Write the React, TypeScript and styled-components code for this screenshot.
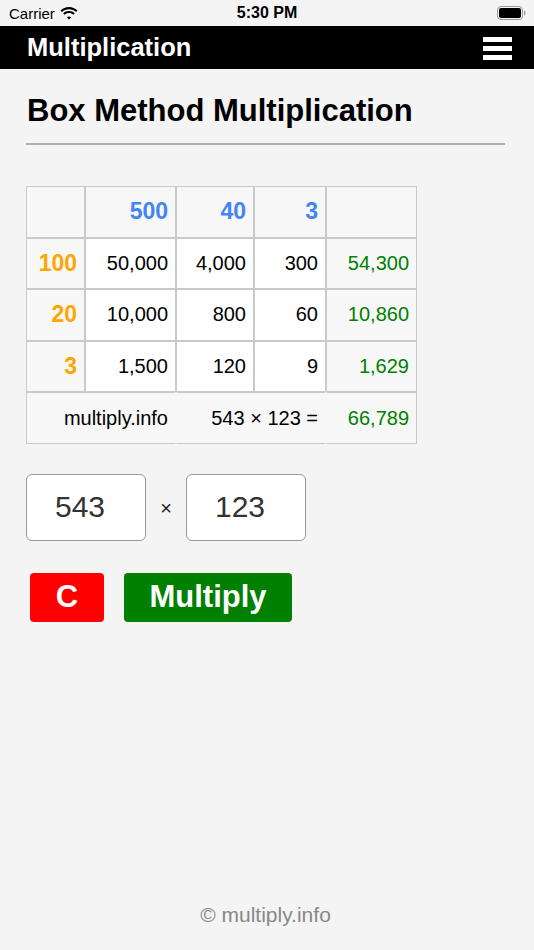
import React from "react";
import styled, { createGlobalStyle } from "styled-components";

const Global = createGlobalStyle`
  html, body { margin: 0; padding: 0; background: #f4f4f4; }
  body { font-family: "Liberation Sans", Arial, sans-serif; }
`;

const Page = styled.div`
  width: 534px;
  height: 950px;
  display: flex;
  flex-direction: column;
  background: #f4f4f4;
  overflow: hidden;
`;

const StatusBar = styled.div`
  height: 26px;
  display: grid;
  grid-template-columns: 1fr auto 1fr;
  align-items: center;
  padding: 0 9px;
  font-size: 15px;
  color: #000;
`;

const Carrier = styled.div`
  display: flex;
  align-items: center;
  gap: 5px;
`;

const Time = styled.div`
  font-weight: 600;
  font-size: 16px;
`;

const Battery = styled.div`
  justify-self: end;
  display: flex;
  align-items: center;
  margin-right: -1px;
`;

const NavBar = styled.div`
  height: 43px;
  background: #000;
  display: flex;
  align-items: center;
  justify-content: space-between;
  padding: 0 22px 0 27px;
`;

const NavTitle = styled.div`
  color: #fff;
  font-weight: bold;
  font-size: 25.5px;
`;

const Burger = styled.div`
  width: 29px;
  display: flex;
  flex-direction: column;
  gap: 4px;
  padding-top: 1px;
`;

const BurgerLine = styled.div`
  height: 5px;
  background: #fff;
`;

const Content = styled.div`
  flex: 1;
  padding: 0 29px 0 26px;
  display: flex;
  flex-direction: column;
`;

const Heading = styled.h1`
  margin: 24px 0 0 1px;
  font-size: 31px;
  font-weight: bold;
  line-height: 36px;
  color: #000;
`;

const Rule = styled.hr`
  margin: 14px 0 0;
  border: 0;
  border-top: 2px solid #b0b0b0;
`;

const Table = styled.table`
  margin-top: 41px;
  border-collapse: separate;
  border-spacing: 0;
  font-size: 20px;
  table-layout: fixed;
  width: 391px;
`;

type CellProps = {
  $bg?: string;
  $color?: string;
  $bold?: boolean;
  $noLeft?: boolean;
  $noRight?: boolean;
};

const Cell = styled.td<CellProps>`
  box-sizing: border-box;
  height: 51.6px;
  padding: 0 7px 0 4px;
  text-align: right;
  border: 1px solid #c9c9c9;
  ${(p) => (p.$noLeft ? "border-left-color: transparent;" : "")}
  ${(p) => (p.$noRight ? "border-right-color: transparent;" : "")}
  background: ${(p) => p.$bg ?? "#fff"};
  color: ${(p) => p.$color ?? "#000"};
  font-weight: ${(p) => (p.$bold ? "bold" : "normal")};
  font-size: ${(p) => (p.$bold ? "23px" : "20px")};
  white-space: nowrap;
`;

const InputRow = styled.div`
  margin-top: 30px;
  display: flex;
  align-items: center;
`;

const NumBox = styled.div`
  box-sizing: border-box;
  width: 120px;
  height: 67px;
  border: 1px solid #999;
  border-radius: 6px;
  background: #fff;
  display: flex;
  align-items: center;
  justify-content: center;
  padding-right: 12px;
  font-size: 30px;
  color: #333;
`;

const Times = styled.div`
  width: 40px;
  text-align: center;
  font-size: 20px;
  color: #222;
  padding-top: 2px;
`;

const ButtonRow = styled.div`
  margin-top: 32px;
  margin-left: 4px;
  display: flex;
  gap: 20px;
`;

const Btn = styled.button<{ $bg: string; $w: number }>`
  width: ${(p) => p.$w}px;
  height: 49px;
  border: 0;
  border-radius: 4px;
  background: ${(p) => p.$bg};
  color: #fff;
  font-family: "Liberation Sans", Arial, sans-serif;
  font-weight: bold;
  font-size: 31px;
  padding: 0;
`;

const Footer = styled.div`
  text-align: center;
  color: #888;
  font-size: 21px;
  padding-bottom: 23px;
`;

const Spacer = styled.div`
  flex: 1;
`;

const HEAD = "#f7f7f7";
const BLUE = "#4285f4";
const ORANGE = "#ffa500";
const GREEN = "#008000";

const rows = [
  ["100", "50,000", "4,000", "300", "54,300"],
  ["20", "10,000", "800", "60", "10,860"],
  ["3", "1,500", "120", "9", "1,629"],
];

export default function App() {
  return (
    <Page>
      <Global />
      <StatusBar>
        <Carrier>
          Carrier
          <svg width="18" height="13" viewBox="0 0 18 13">
            <path d="M9 2.2c2.7 0 5.2 1 7.1 2.8l1.4-1.5C15.2 1.3 12.2 0 9 0S2.8 1.3.5 3.5L1.9 5C3.8 3.2 6.3 2.2 9 2.2z" fill="#000" />
            <path d="M9 6c1.7 0 3.2.6 4.4 1.7l1.4-1.5C13.2 4.8 11.2 4 9 4s-4.2.8-5.8 2.2l1.4 1.5C5.8 6.6 7.3 6 9 6z" fill="#000" />
            <path d="M9 9.6c.8 0 1.5.3 2 .8L9 12.6l-2-2.2c.5-.5 1.2-.8 2-.8z" fill="#000" />
          </svg>
        </Carrier>
        <Time>5:30 PM</Time>
        <Battery>
          <svg width="29" height="14" viewBox="0 0 29 14">
            <rect x="0.5" y="0.5" width="25" height="13" rx="3.5" fill="none" stroke="#999" />
            <rect x="2" y="2" width="22" height="10" rx="2" fill="#000" />
            <path d="M27 4.5c1 .3 1.5 1.2 1.5 2.5s-.5 2.2-1.5 2.5z" fill="#999" />
          </svg>
        </Battery>
      </StatusBar>
      <NavBar>
        <NavTitle>Multiplication</NavTitle>
        <Burger>
          <BurgerLine />
          <BurgerLine />
          <BurgerLine />
        </Burger>
      </NavBar>
      <Content>
        <Heading>Box Method Multiplication</Heading>
        <Rule />
        <Table>
          <colgroup>
            <col style={{ width: 59 }} />
            <col style={{ width: 91 }} />
            <col style={{ width: 78 }} />
            <col style={{ width: 72 }} />
            <col style={{ width: 91 }} />
          </colgroup>
          <tbody>
            <tr>
              <Cell $bg={HEAD} />
              <Cell $bg={HEAD} $color={BLUE} $bold>500</Cell>
              <Cell $bg={HEAD} $color={BLUE} $bold>40</Cell>
              <Cell $bg={HEAD} $color={BLUE} $bold>3</Cell>
              <Cell $bg={HEAD} />
            </tr>
            {rows.map((r) => (
              <tr key={r[0]}>
                <Cell $bg={HEAD} $color={ORANGE} $bold>{r[0]}</Cell>
                <Cell>{r[1]}</Cell>
                <Cell>{r[2]}</Cell>
                <Cell>{r[3]}</Cell>
                <Cell $bg={HEAD} $color={GREEN}>{r[4]}</Cell>
              </tr>
            ))}
            <tr>
              <Cell $bg={HEAD} colSpan={2} $noRight>multiply.info</Cell>
              <Cell $bg={HEAD} colSpan={2} $noLeft $noRight>543 × 123 =</Cell>
              <Cell $bg={HEAD} $color={GREEN} $noLeft>66,789</Cell>
            </tr>
          </tbody>
        </Table>
        <InputRow>
          <NumBox>543</NumBox>
          <Times>×</Times>
          <NumBox>123</NumBox>
        </InputRow>
        <ButtonRow>
          <Btn $bg="#ff0000" $w={74}>C</Btn>
          <Btn $bg="#008000" $w={168}>Multiply</Btn>
        </ButtonRow>
        <Spacer />
        <Footer>© multiply.info</Footer>
      </Content>
    </Page>
  );
}
